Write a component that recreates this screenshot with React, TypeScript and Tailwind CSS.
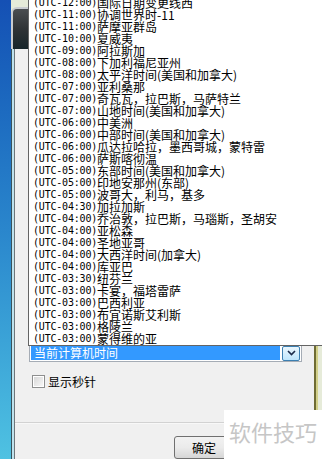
import React from "react";

const zones: [string, string][] = [
  ["-12:00", "国际日期变更线西"],
  ["-11:00", "协调世界时-11"],
  ["-11:00", "萨摩亚群岛"],
  ["-10:00", "夏威夷"],
  ["-09:00", "阿拉斯加"],
  ["-08:00", "下加利福尼亚州"],
  ["-08:00", "太平洋时间(美国和加拿大)"],
  ["-07:00", "亚利桑那"],
  ["-07:00", "奇瓦瓦，拉巴斯，马萨特兰"],
  ["-07:00", "山地时间(美国和加拿大)"],
  ["-06:00", "中美洲"],
  ["-06:00", "中部时间(美国和加拿大)"],
  ["-06:00", "瓜达拉哈拉，墨西哥城，蒙特雷"],
  ["-06:00", "萨斯喀彻温"],
  ["-05:00", "东部时间(美国和加拿大)"],
  ["-05:00", "印地安那州(东部)"],
  ["-05:00", "波哥大，利马，基多"],
  ["-04:30", "加拉加斯"],
  ["-04:00", "乔治敦，拉巴斯，马瑙斯，圣胡安"],
  ["-04:00", "亚松森"],
  ["-04:00", "圣地亚哥"],
  ["-04:00", "大西洋时间(加拿大)"],
  ["-04:00", "库亚巴"],
  ["-03:30", "纽芬兰"],
  ["-03:00", "卡宴，福塔雷萨"],
  ["-03:00", "巴西利亚"],
  ["-03:00", "布宜诺斯艾利斯"],
  ["-03:00", "格陵兰"],
  ["-03:00", "蒙得维的亚"],
];

export default function App() {
  return (
    <div className="relative flex w-[322px] h-[459px] overflow-hidden bg-[#e6ebd9] font-['Noto_Sans_CJK_SC',sans-serif] text-[12px] text-black">
      {/* desktop on the left */}
      <div className="w-[11px] h-full bg-linear-to-b from-[#1550b4] via-[#2a86cc] to-[#4fc2e2]" />

      {/* dialog window */}
      <div className="flex flex-col w-[307px] mt-[7px]">
        <div className="h-[43px] rounded-tl-[6px] border-l-2 border-t-2 border-[#c9ccd0] bg-linear-to-b from-[#4b4e51] via-[#2f3336] to-[#18262b]" />
        <div className="flex flex-1">
          <div className="w-[4px] flex">
            <div className="w-[1px] bg-[#39535c]" />
            <div className="w-[2px] bg-[#bfe3ee]" />
            <div className="w-[1px] bg-[#6d7579]" />
          </div>
          <div className="flex flex-col w-[299px] bg-[#f0f0f0]">
            {/* combobox */}
            <div className="pt-[295px] pl-[14px]">
              <div className="flex items-center w-[273px] h-[18px] border border-[#a5acb5] bg-white p-[1px] gap-[2px]">
                <div className="flex items-center w-[251px] h-[14px] bg-[#3399ff] pl-[3px] text-white leading-[14px]">
                  当前计算机时间
                </div>
                <div className="flex items-center justify-center w-[18px] h-[15px] border border-[#3c7fb1] rounded-[2px] bg-linear-to-b from-[#eaf6fd] to-[#bee6fd]">
                  <svg width="9" height="6" viewBox="0 0 9 6">
                    <polyline points="1,1 4.5,4.5 8,1" fill="none" stroke="#1c2b4a" strokeWidth="1.6" />
                  </svg>
                </div>
              </div>
            </div>

            {/* show seconds checkbox */}
            <div className="flex items-center gap-[3px] pl-[17px] mt-[13px] h-[13px]">
              <div className="w-[13px] h-[13px] border border-[#8e8f8f] bg-white p-[1px]">
                <div className="w-full h-full bg-linear-to-br from-[#d8d8d8] to-[#f7f7f7]" />
              </div>
              <span className="leading-[13px]">显示秒针</span>
            </div>

            <div className="mt-[34px] border-t border-[#d2d2d2]" />
            <div className="flex-1 border-t border-[#f8f8f8] bg-[#f0f0f0] pl-[159px] pt-[12px]">
              <div className="flex items-center justify-center w-[60px] h-[23px] rounded-[3px] border border-[#707070] bg-linear-to-b from-[#f2f2f2] via-[#ebebeb] to-[#d6d6d6] text-[12px]">
                确定
              </div>
            </div>
          </div>
          <div className="w-[4px] flex">
            <div className="w-[2px] bg-[#6f6c34]" />
            <div className="w-[2px] bg-[#d2d08a]" />
          </div>
        </div>
      </div>

      {/* dropped-down time zone list */}
      <div className="absolute left-[28px] top-0 right-0 h-[346px] overflow-hidden border-l border-b border-[#646464] bg-white">
        <div className="flex flex-col -mt-[3px]">
          {zones.map(([off, name], i) => (
            <div key={i} className="flex items-center h-[12px] pl-[4px] whitespace-nowrap leading-[12px]">
              <span className="font-['DejaVu_Sans_Mono',monospace] text-[10px] tracking-[-0.2px]">
                (UTC{off})
              </span>
              <span>{name}</span>
            </div>
          ))}
        </div>
      </div>

      {/* watermark */}
      <div className="absolute left-[224px] top-[410px] right-0 bottom-0 bg-white pl-[5px] pt-[6px] text-[22px] leading-[30px] text-[#c6c6c6]">
        软件技巧
      </div>
    </div>
  );
}
